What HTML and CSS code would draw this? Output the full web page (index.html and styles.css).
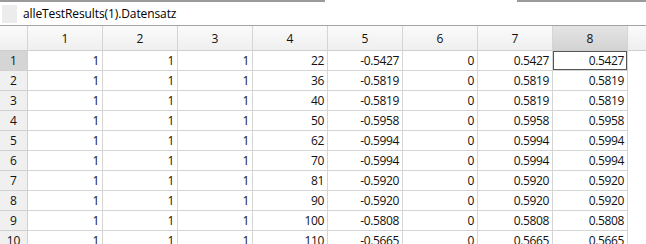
FILE: index.html
```html
<!DOCTYPE html>
<html>
<head>
<meta charset="utf-8">
<link rel="stylesheet" href="styles.css">
</head>
<body>
<div class="tabline"><span class="seg seg-left"></span><span class="seg-gap"></span><span class="seg seg-right"></span></div>
<div class="title"><span class="icon"></span><span class="title-text">alleTestResults(1).Datensatz</span></div>
<div class="grid">
  <div class="ch corner"></div>
  <div class="ch">1</div><div class="ch">2</div><div class="ch">3</div><div class="ch">4</div><div class="ch">5</div><div class="ch">6</div><div class="ch">7</div><div class="ch ch-sel">8</div><div class="ch filler"></div>

  <div class="rh rh-sel">1</div><div class="c">1</div><div class="c">1</div><div class="c">1</div><div class="c">22</div><div class="c">-0.5427</div><div class="c">0</div><div class="c">0.5427</div><div class="c sel">0.5427</div><div class="f"></div>
  <div class="rh">2</div><div class="c">1</div><div class="c">1</div><div class="c">1</div><div class="c">36</div><div class="c">-0.5819</div><div class="c">0</div><div class="c">0.5819</div><div class="c">0.5819</div><div class="f"></div>
  <div class="rh">3</div><div class="c">1</div><div class="c">1</div><div class="c">1</div><div class="c">40</div><div class="c">-0.5819</div><div class="c">0</div><div class="c">0.5819</div><div class="c">0.5819</div><div class="f"></div>
  <div class="rh">4</div><div class="c">1</div><div class="c">1</div><div class="c">1</div><div class="c">50</div><div class="c">-0.5958</div><div class="c">0</div><div class="c">0.5958</div><div class="c">0.5958</div><div class="f"></div>
  <div class="rh">5</div><div class="c">1</div><div class="c">1</div><div class="c">1</div><div class="c">62</div><div class="c">-0.5994</div><div class="c">0</div><div class="c">0.5994</div><div class="c">0.5994</div><div class="f"></div>
  <div class="rh">6</div><div class="c">1</div><div class="c">1</div><div class="c">1</div><div class="c">70</div><div class="c">-0.5994</div><div class="c">0</div><div class="c">0.5994</div><div class="c">0.5994</div><div class="f"></div>
  <div class="rh">7</div><div class="c">1</div><div class="c">1</div><div class="c">1</div><div class="c">81</div><div class="c">-0.5920</div><div class="c">0</div><div class="c">0.5920</div><div class="c">0.5920</div><div class="f"></div>
  <div class="rh">8</div><div class="c">1</div><div class="c">1</div><div class="c">1</div><div class="c">90</div><div class="c">-0.5920</div><div class="c">0</div><div class="c">0.5920</div><div class="c">0.5920</div><div class="f"></div>
  <div class="rh">9</div><div class="c">1</div><div class="c">1</div><div class="c">1</div><div class="c">100</div><div class="c">-0.5808</div><div class="c">0</div><div class="c">0.5808</div><div class="c">0.5808</div><div class="f"></div>
  <div class="rh">10</div><div class="c">1</div><div class="c">1</div><div class="c">1</div><div class="c">110</div><div class="c">-0.5665</div><div class="c">0</div><div class="c">0.5665</div><div class="c">0.5665</div><div class="f"></div>
</div>
</body>
</html>
```
FILE: styles.css
```css
html, body {
  margin: 0;
  padding: 0;
  background: #ffffff;
  overflow: hidden;
}
body {
  width: 646px;
  height: 244px;
  font-family: "Open Sans", "Noto Sans", sans-serif;
  color: #111;
}
.tabline {
  display: flex;
  height: 2px;
}
.seg {
  display: block;
  height: 2px;
  background: #9a9a9a;
}
.seg-left { width: 325px; }
.seg-gap { width: 192px; }
.seg-right { flex: 1; }
.title {
  display: flex;
  align-items: center;
  height: 23px;
}
.icon {
  width: 15px;
  height: 18px;
  margin-left: 2px;
  background: #ececec;
}
.title-text {
  margin-left: 6px;
  font-size: 12px;
  color: #000;
  letter-spacing: -0.1px;
}
.grid {
  display: grid;
  grid-template-columns: 28px repeat(8, 75px) 1fr;
  grid-template-rows: 25px;
  grid-auto-rows: 20px;
  border-top: 1px solid #a3a3a3;
  font-size: 11px;
}
.grid > div {
  box-sizing: border-box;
  white-space: nowrap;
  overflow: hidden;
}
.ch {
  display: flex;
  align-items: center;
  justify-content: center;
  background: linear-gradient(#fbfbfb, #efefef);
  border-right: 1px solid #d5d5d5;
  border-bottom: 1px solid #cfcfcf;
  font-size: 12px;
}
.ch-sel {
  background: linear-gradient(#e4e4e4, #d3d3d3);
}
.filler {
  border-right: none;
}
.rh {
  display: flex;
  align-items: center;
  justify-content: center;
  background: #f0f0f0;
  border-right: 1px solid #d0d0d0;
  border-bottom: 1px solid #d0d0d0;
  font-size: 12px;
}
.rh-sel {
  background: #d5d5d5;
}
.c {
  display: flex;
  align-items: center;
  justify-content: flex-end;
  padding-right: 3px;
  border-right: 1px solid #d5d5d5;
  border-bottom: 1px solid #d5d5d5;
  font-size: 12px;
  letter-spacing: -0.35px;
}
.sel {
  box-shadow: inset 0 0 0 1px #555555;
}
.f {
  background: #ffffff;
}
```
